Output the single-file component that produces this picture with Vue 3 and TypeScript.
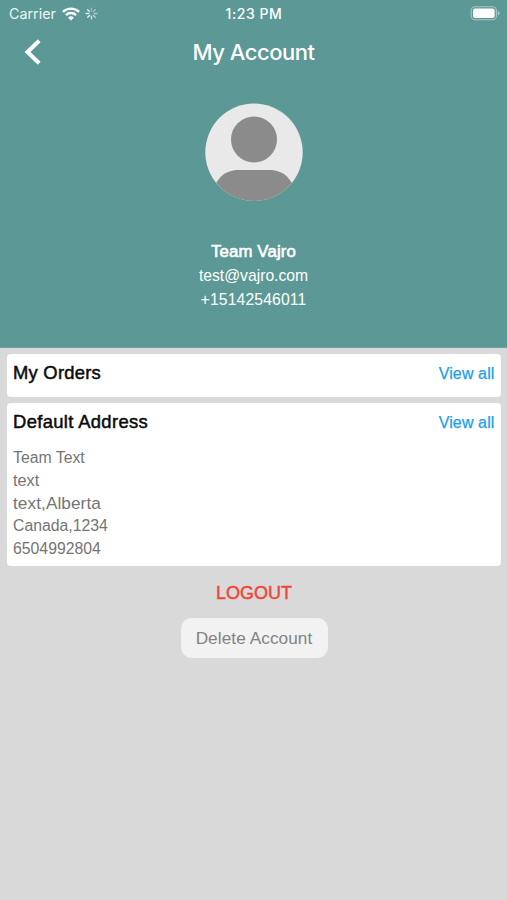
<script setup lang="ts">
interface Contact { text: string; kind: string }

const contacts: Contact[] = [
  { text: 'Team Vajro', kind: 'name' },
  { text: 'test@vajro.com', kind: 'email' },
  { text: '+15142546011', kind: 'phone' },
]

const address: Contact[] = [
  { text: 'Team Text', kind: 'recipient' },
  { text: 'text', kind: 'street' },
  { text: 'text,Alberta', kind: 'region' },
  { text: 'Canada,1234', kind: 'country' },
  { text: '6504992804', kind: 'tel' },
]

const spokes: { angle: number; opacity: number }[] = [0, 1, 2, 3, 4, 5, 6, 7].map((i) => ({
  angle: i * 45,
  opacity: i > 4 ? 0.85 : 0.35 + i * 0.08,
}))
</script>

<template>
  <div class="screen">
    <header class="hero">
      <div class="status">
        <div class="left">
          <span class="carrier">Carrier</span>
          <svg class="wifi" width="18" height="14" viewBox="0 0 18 14">
            <g fill="none" stroke="#fff" stroke-width="2.3">
              <path d="M.9 4.9a11.5 11.5 0 0 1 16.2 0" />
              <path d="M3.9 8.1a7.2 7.2 0 0 1 10.2 0" />
            </g>
            <path d="M9 13.6 6.1 10.7a4.1 4.1 0 0 1 5.8 0z" fill="#fff" />
          </svg>
          <svg class="spinner" width="13" height="13" viewBox="-6.5 -6.5 13 13">
            <path
              v-for="s in spokes"
              :key="s.angle"
              d="M0-5.4V-2.7"
              stroke="#fff"
              stroke-width="1.4"
              stroke-linecap="round"
              :transform="`rotate(${s.angle})`"
              :opacity="s.opacity"
            />
          </svg>
        </div>
        <span class="time">1:23 PM</span>
        <svg class="battery" width="30" height="15" viewBox="0 0 30 15">
          <rect x="1.2" y=".8" width="25.2" height="13" rx="3.8" fill="none" stroke="#fff" stroke-opacity=".48" stroke-width="1.1" />
          <rect x="3" y="2.6" width="21.6" height="9.4" rx="2" fill="#fff" />
          <path d="M27.8 5.1c2.4.8 2.4 3.6 0 4.4z" fill="#fff" fill-opacity=".5" />
        </svg>
      </div>
      <nav class="nav">
        <svg class="back" width="18" height="28" viewBox="0 0 18 28">
          <path d="M15.2 2.7 3.5 14l11.7 11.3" fill="none" stroke="#fff" stroke-width="4" />
        </svg>
        <h1>My Account</h1>
        <span></span>
      </nav>
      <svg class="avatar" width="98" height="98" viewBox="0 0 98 98">
        <defs>
          <clipPath id="avatar-disc"><circle cx="49" cy="49.3" r="48.7" /></clipPath>
        </defs>
        <circle cx="49" cy="49.3" r="48.7" fill="#e9e9e9" />
        <g fill="#8b8b8b" clip-path="url(#avatar-disc)">
          <circle cx="49" cy="36.4" r="23" />
          <path d="M8 98V90C10 76 20 66.9 33 66.9h32c13 0 23 9.1 25 23.1v8z" />
        </g>
      </svg>
      <div class="contacts">
        <span v-for="c in contacts" :key="c.kind" :class="c.kind">{{ c.text }}</span>
      </div>
    </header>

    <main>
      <section class="card orders">
        <div class="card-head"><h2>My Orders</h2><a>View all</a></div>
      </section>
      <section class="card">
        <div class="card-head"><h2 class="wide">Default Address</h2><a>View all</a></div>
        <address>
          <span v-for="line in address" :key="line.kind" :class="line.kind">{{ line.text }}</span>
        </address>
      </section>
      <button class="logout">LOGOUT</button>
      <button class="delete">Delete Account</button>
    </main>
  </div>
</template>

<style>
body {
  margin: 0;
  background: #d9d9d9;
}
</style>

<style scoped>
.screen {
  height: 900px;
  overflow: hidden;
  background: #d9d9d9;
  font-family: "Liberation Sans", Arial, sans-serif;
}
.hero {
  display: flex;
  flex-direction: column;
  align-items: center;
  box-sizing: border-box;
  height: 348px;
  color: #fff;
  background: #5b9896;
  border-bottom: 1px solid #6f9f9d;
}
.status,
.nav {
  display: grid;
  grid-template-columns: 1fr auto 1fr;
  align-items: center;
  box-sizing: border-box;
  width: 100%;
}
.status {
  height: 27px;
  padding: 0 7px 0 9px;
  font: 500 14px/27px Inter, sans-serif;
}
.left {
  display: flex;
  align-items: center;
}
.carrier {
  width: 53px;
  font-size: 14.3px;
  font-weight: 400;
  color: #eef6f5;
}
.spinner {
  margin-left: 5px;
}
.time {
  margin-right: 1px;
  letter-spacing: 0.55px;
}
.battery {
  justify-self: end;
}
.nav {
  height: 50px;
  padding-left: 24px;
  padding-right: 24px;
}
h1 {
  margin: 0;
  font: 500 22px/50px Inter, sans-serif;
  letter-spacing: -0.5px;
}
.avatar {
  margin-top: 26px;
}
.contacts {
  display: flex;
  flex-direction: column;
  align-items: center;
  margin-top: 39px;
  line-height: 24px;
}
.name {
  font-size: 16.8px;
  letter-spacing: 0.15px;
  -webkit-text-stroke: 0.6px #fff;
}
.email {
  font-size: 15.7px;
}
.phone {
  font-size: 15.7px;
  letter-spacing: 0.15px;
}
main {
  display: flex;
  flex-direction: column;
  align-items: center;
  padding: 6px 6px 0 7px;
}
.card {
  align-self: stretch;
  box-sizing: border-box;
  height: 163px;
  padding: 0 6.5px 0 6px;
  background: #fff;
  border-radius: 4px;
}
.orders {
  height: 43px;
  margin-bottom: 6px;
}
.card-head {
  display: flex;
  justify-content: space-between;
  height: 39px;
  line-height: 38px;
}
h2 {
  margin: 0;
  font-size: 18.4px;
  font-weight: 400;
  letter-spacing: 0.24px;
  color: #0c0c0c;
  -webkit-text-stroke: 0.5px #0c0c0c;
}
.wide {
  letter-spacing: 0.35px;
}
a {
  font-size: 16px;
  line-height: 39px;
  letter-spacing: 0.12px;
  color: #209eeb;
  -webkit-text-stroke: 0.25px #209eeb;
}
address {
  display: flex;
  flex-direction: column;
  margin-top: 4px;
  font-size: 15.8px;
  font-style: normal;
  line-height: 23px;
  color: #757575;
}
.street {
  font-size: 16.3px;
}
.region {
  font-size: 17.2px;
  letter-spacing: 0.08px;
}
.country {
  line-height: 22px;
}
button {
  padding: 0;
  border: 0;
  background: none;
  font-family: inherit;
}
.logout {
  height: 26px;
  margin-top: 14px;
  font-size: 18px;
  line-height: 26px;
  color: #f44336;
  -webkit-text-stroke: 0.45px #f44336;
}
.delete {
  width: 147px;
  height: 40px;
  margin-top: 12px;
  border-radius: 11px;
  font-size: 17.2px;
  letter-spacing: 0.08px;
  line-height: 40px;
  color: #838383;
  background: #f2f2f2;
}
</style>
